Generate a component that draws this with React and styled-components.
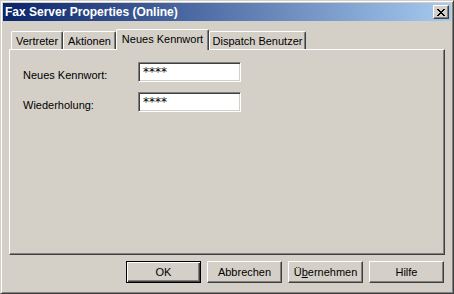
import React from "react";
import styled, { createGlobalStyle, css } from "styled-components";

const GlobalStyle = createGlobalStyle`
  html, body { margin: 0; padding: 0; background: #d4d0c8; }
  body { font-family: "Liberation Sans", Arial, sans-serif; font-size: 11px; color: #000; }
  * { box-sizing: border-box; }
`;

const Window = styled.div`
  width: 454px;
  height: 294px;
  background: #d4d0c8;
  border: 1px solid;
  border-color: #d4d0c8 #404040 #404040 #d4d0c8;
  box-shadow: inset 1px 1px #fff, inset -1px -1px #808080;
  padding: 2px;
  display: flex;
  flex-direction: column;
`;

const TitleBar = styled.div`
  height: 18px;
  flex: none;
  background: linear-gradient(to right, #0a246a, #a6caf0);
  display: flex;
  align-items: center;
  justify-content: space-between;
  padding: 0 2px;
`;

const Title = styled.span`
  color: #fff;
  font-weight: bold;
  font-size: 12px;
  line-height: 18px;
  white-space: nowrap;
`;

const CloseButton = styled.div`
  width: 16px;
  height: 14px;
  background: #d4d0c8;
  border: 1px solid;
  border-color: #fff #404040 #404040 #fff;
  box-shadow: inset -1px -1px #808080;
  display: flex;
  align-items: center;
  justify-content: center;
  padding-right: 1px;
`;

const Body = styled.div`
  flex: 1;
  display: flex;
  flex-direction: column;
  padding: 8px 6px 8px 6px;
`;

const TabStrip = styled.div`
  height: 20px;
  flex: none;
  display: flex;
  align-items: flex-end;
  padding-left: 2px;
  position: relative;
  z-index: 1;
`;

const Tab = styled.div`
  width: ${(p) => p.$w}px;
  height: 18px;
  flex: none;
  background: #d4d0c8;
  border-left: 1px solid #fff;
  border-top: 1px solid #fff;
  border-right: 1px solid #404040;
  box-shadow: inset -1px 0 #808080;
  border-radius: 2px 2px 0 0;
  display: flex;
  align-items: center;
  justify-content: center;
  white-space: nowrap;
  padding-top: 1px;
  ${(p) =>
    p.$active &&
    css`
      height: 21px;
      margin-bottom: -1px;
      padding-top: 0;
      padding-bottom: 3px;
    `}
`;

const Panel = styled.div`
  flex: 1;
  border: 1px solid;
  border-color: #fff #404040 #404040 #fff;
  box-shadow: inset -1px -1px #808080;
  padding: 12px 0 0 13px;
`;

const Form = styled.div`
  display: grid;
  grid-template-columns: 115px 103px;
  grid-auto-rows: 20px;
  row-gap: 10px;
`;

const Label = styled.label`
  line-height: 20px;
  padding-top: 3px;
  white-space: nowrap;
`;

const Field = styled.input`
  width: 103px;
  height: 20px;
  margin: 0;
  background: #fff;
  border: 1px solid;
  border-color: #808080 #fff #fff #808080;
  box-shadow: inset 1px 1px #404040, inset -1px -1px #d4d0c8;
  font-family: "DejaVu Sans", "Liberation Sans", sans-serif;
  font-size: 12px;
  padding: 0 0 1px 4px;
  color: #000;
  outline: none;
`;

const ButtonRow = styled.div`
  flex: none;
  display: flex;
  justify-content: flex-end;
  gap: 6px;
  margin-top: 6px;
  padding-right: 1px;
`;

const Button = styled.button`
  width: 75px;
  height: 22px;
  margin: 0;
  padding: 0;
  background: #d4d0c8;
  font-family: "Liberation Sans", Arial, sans-serif;
  font-size: 11px;
  color: #000;
  border: 1px solid;
  border-color: #fff #404040 #404040 #fff;
  box-shadow: inset -1px -1px #808080;
  ${(p) =>
    p.$default &&
    css`
      border-color: #000;
      box-shadow: inset 1px 1px #fff, inset -1px -1px #404040,
        inset -2px -2px #808080;
    `}
`;

const Key = styled.span`
  text-decoration: underline;
`;

const CloseGlyph = () => (
  <svg width="8" height="7" viewBox="0 0 8 7" shapeRendering="crispEdges">
    <path
      fill="#000"
      d="M0 0h2v1H0zM6 0h2v1H6zM1 1h2v1H1zM5 1h2v1H5zM2 2h4v1H2zM3 3h2v1H3zM2 4h4v1H2zM1 5h2v1H1zM5 5h2v1H5zM0 6h2v1H0zM6 6h2v1H6z"
    />
  </svg>
);

const tabs = [
  { label: "Vertreter", w: 52 },
  { label: "Aktionen", w: 53 },
  { label: "Neues Kennwort", w: 93, active: true },
  { label: "Dispatch Benutzer", w: 97 },
];

export default function App() {
  return (
    <>
      <GlobalStyle />
      <Window>
        <TitleBar>
          <Title>Fax Server Properties (Online)</Title>
          <CloseButton>
            <CloseGlyph />
          </CloseButton>
        </TitleBar>
        <Body>
          <TabStrip>
            {tabs.map((t) => (
              <Tab key={t.label} $w={t.w} $active={t.active}>
                {t.label}
              </Tab>
            ))}
          </TabStrip>
          <Panel>
            <Form>
              <Label>Neues Kennwort:</Label>
              <Field type="text" readOnly value="****" />
              <Label>Wiederholung:</Label>
              <Field type="text" readOnly value="****" />
            </Form>
          </Panel>
          <ButtonRow>
            <Button $default>OK</Button>
            <Button>Abbrechen</Button>
            <Button>
              Ü<Key>b</Key>ernehmen
            </Button>
            <Button>Hilfe</Button>
          </ButtonRow>
        </Body>
      </Window>
    </>
  );
}
